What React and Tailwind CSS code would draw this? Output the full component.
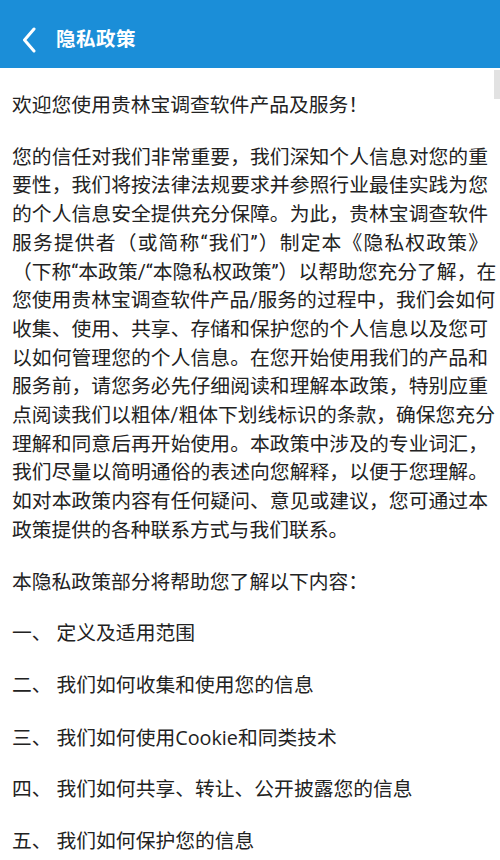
import React from 'react';

const intro = [
  '您的信任对我们非常重要，我们深知个人信息对您的重',
  '要性，我们将按法律法规要求并参照行业最佳实践为您',
  '的个人信息安全提供充分保障。为此，贵林宝调查软件',
  '服务提供者（或简称“我们”）制定本《隐私权政策》',
  '（下称“本政策/“本隐私权政策”）以帮助您充分了解，在',
  '您使用贵林宝调查软件产品/服务的过程中，我们会如何',
  '收集、使用、共享、存储和保护您的个人信息以及您可',
  '以如何管理您的个人信息。在您开始使用我们的产品和',
  '服务前，请您务必先仔细阅读和理解本政策，特别应重',
  '点阅读我们以粗体/粗体下划线标识的条款，确保您充分',
  '理解和同意后再开始使用。本政策中涉及的专业词汇，',
  '我们尽量以简明通俗的表述向您解释，以便于您理解。',
  '如对本政策内容有任何疑问、意见或建议，您可通过本',
];

const items = [
  ['一、', '定义及适用范围'],
  ['二、', '我们如何收集和使用您的信息'],
  ['三、', <>我们如何使用<span style={{ fontFamily: '"Open Sans", sans-serif' }}>Cookie</span>和同类技术</>],
  ['四、', '我们如何共享、转让、公开披露您的信息'],
  ['五、', '我们如何保护您的信息'],
];

const font = { fontFamily: 'Roboto, "Noto Sans CJK SC", "Noto Sans", sans-serif' };

export default function App() {
  return (
    <div className="relative w-[500px] h-[860px] overflow-hidden bg-white" style={font}>
      {/* Header */}
      <div className="bg-[#1b8ed8] pt-3">
        <div className="h-14 flex items-center">
          <svg width="14" height="26" viewBox="0 0 14 26" className="ml-[22px]">
            <path d="M12 2 L2.5 13 L12 24" fill="none" stroke="#fff" strokeWidth="3" strokeLinecap="round" strokeLinejoin="round" />
          </svg>
          <span className="ml-5 text-white text-[19.5px] font-semibold tracking-[0.5px]">隐私政策</span>
        </div>
      </div>

      {/* scroll indicator */}
      <div className="absolute right-0 top-[70px] w-[6px] h-[29px] bg-[#e2e2e2]" />

      {/* Body */}
      <div className="px-3 pt-6 text-[19.8px] leading-[28.7px] text-[#222] flex flex-col gap-[23px]">
        <p>欢迎您使用贵林宝调查软件产品及服务！</p>

        <div>
          {intro.map((line, i) => (
            <div key={i} className="text-justify [text-align-last:justify] whitespace-nowrap">
              {line}
            </div>
          ))}
          <div>政策提供的各种联系方式与我们联系。</div>
        </div>

        <p>本隐私政策部分将帮助您了解以下内容：</p>

        {items.map(([n, t]) => (
          <p key={n} className="whitespace-nowrap">
            {n} {t}
          </p>
        ))}
      </div>
    </div>
  );
}
